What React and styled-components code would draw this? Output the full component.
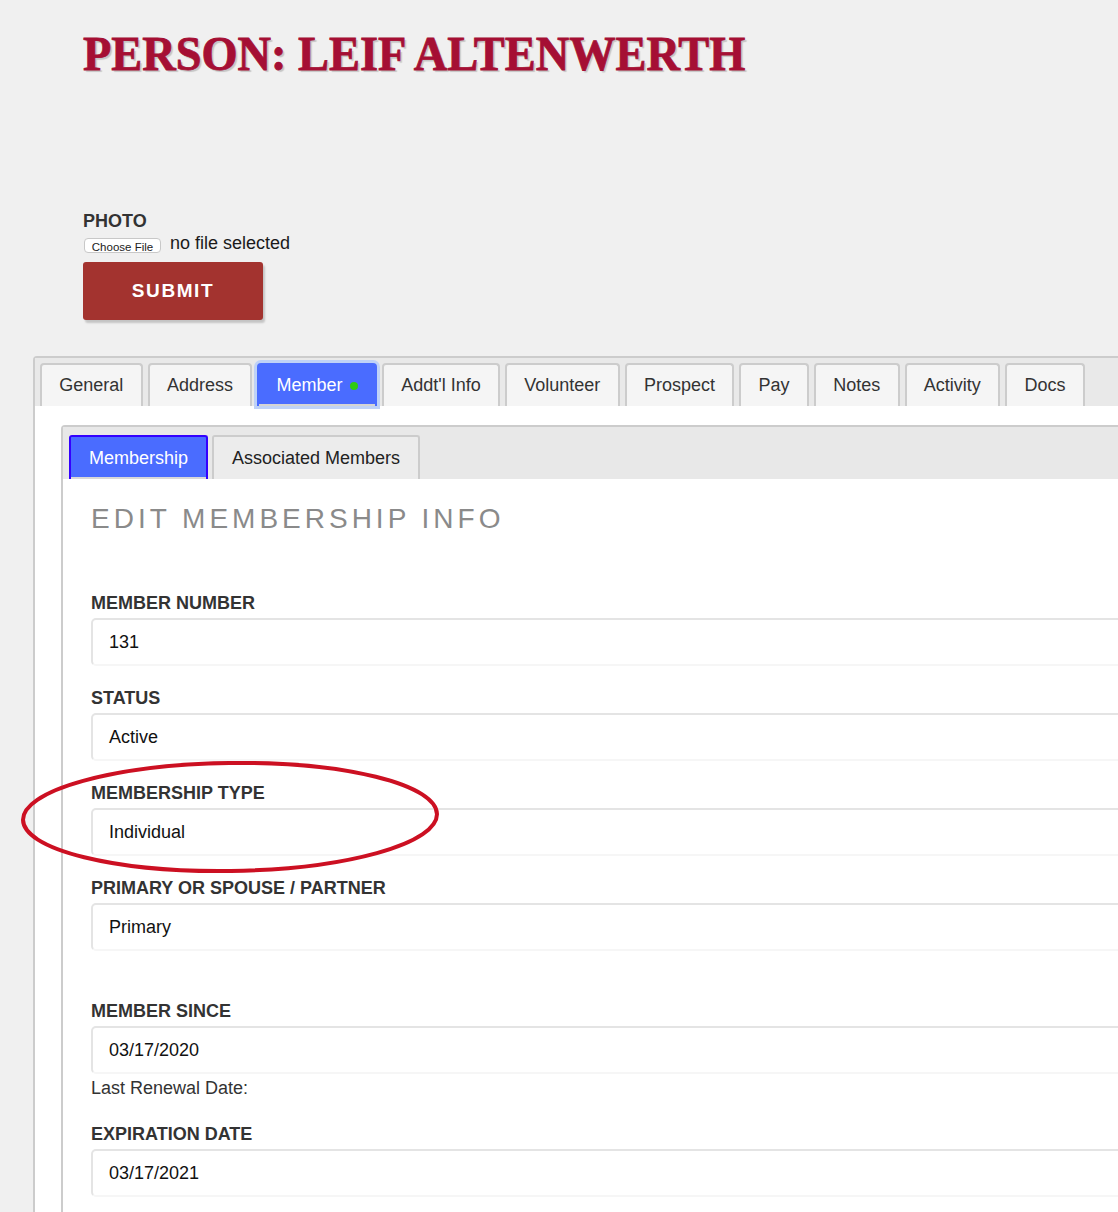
import React from 'react';
import styled, { createGlobalStyle } from "styled-components";

const GlobalStyle = createGlobalStyle`
  html, body {
    margin:0;
    padding:0;
    overflow:hidden;
    background:#f0f0f0;
    font-family:"Liberation Sans", Arial, sans-serif;
  }
`

const Page = styled.div`
  position:relative;
  min-height:1212px;
`

const Header = styled.div`
  padding:30px 0 0 83px;
`

const Title = styled.h1`
  margin:0;
  font-family:"Liberation Serif", serif;
  font-weight:bold;
  font-size:48px;
  line-height:47px;
  color:#a50f34;
  -webkit-text-stroke:0.8px #a50f34;
  text-shadow:2px 2px 1px rgba(0,0,0,0.18);
  white-space:nowrap;
  transform:scaleX(0.966);
  transform-origin:left center;
`

const PhotoLabel = styled.div`
  margin-top:133px;
  font-size:18px;
  line-height:22px;
  font-weight:bold;
  color:#333;
`

const FileRow = styled.div`
  display:flex;
  align-items:flex-end;
  gap:9px;
  height:22px;
`

const ChooseFile = styled.button`
  margin:0 0 1px 1px;
  height:15px;
  width:77px;
  padding:2px 0 0;
  font-family:"Liberation Sans", Arial, sans-serif;
  font-size:11.5px;
  line-height:13px;
  color:#222;
  background:#fff;
  border:1px solid #c8c8c8;
  border-radius:4px;
  overflow:hidden;
`

const FileText = styled.span`
  font-size:18px;
  line-height:22px;
  color:#1a1a1a;
`

const Submit = styled.button`
  margin-top:8px;
  width:180px;
  height:58px;
  background:#a3332f;
  color:#fff;
  border:none;
  border-radius:3px;
  box-shadow:2px 3px 2px rgba(0,0,0,0.18);
  font-family:"Liberation Sans", Arial, sans-serif;
  font-weight:bold;
  font-size:19px;
  letter-spacing:1.6px;
`

const Panel = styled.div`
  margin:36px 0 0 33px;
  width:1200px;
  border-top:2px solid #ccc;
  border-left:2px solid #ccc;
  border-radius:4px 0 0 0;
  min-height:860px;
  background:#fff;
`

const TabBar = styled.div`
  display:flex;
  gap:5px;
  padding:5px 5px 0;
  background:#e9e9e9;
`

const Tab = styled.div`
  position:relative;
  display:flex;
  align-items:center;
  height:43px;
  box-sizing:border-box;
  padding:0 17.3px;
  border:2px solid ${p => p.active ? '#4a6cff' : '#ccc'};
  border-bottom:none;
  border-radius:4px 4px 0 0;
  background:${p => p.active ? '#4a6cff' : '#f5f5f5'};
  color:${p => p.active ? '#fff' : '#333'};
  font-size:18px;
  z-index:${p => p.active ? 1 : 0};
  box-shadow:${p => p.active ? '0 0 0 3px #bfd2f7, inset 0 -2px 0 #d4d4d4' : 'none'};
`

const Dot = styled.span`
  display:inline-block;
  width:8px;
  height:8px;
  border-radius:50%;
  background:#2fcc10;
  margin-left:7px;
`

const Content = styled.div`
  padding:19px 0 0 26px;
  background:#fff;
`

const InnerPanel = styled.div`
  border-top:2px solid #ccc;
  border-left:2px solid #ccc;
  border-radius:4px 0 0 0;
`

const InnerTabBar = styled.div`
  display:flex;
  gap:4px;
  padding:8px 6px 0;
  background:#e8e8e8;
`

const InnerTab = styled.div`
  display:flex;
  align-items:center;
  height:44px;
  box-sizing:border-box;
  padding:0 18px;
  border:2px solid ${p => p.active ? '#3300ff' : '#ccc'};
  border-bottom:none;
  border-radius:3px 3px 0 0;
  background:${p => p.active ? '#4a6cff' : '#ececec'};
  color:${p => p.active ? '#fff' : '#222'};
  font-size:18px;
  box-shadow:${p => p.active ? 'inset 0 -2px 0 #d8d8d8' : 'none'};
`

const Form = styled.div`
  padding:24px 0 40px 28px;
  background:#fff;
`

const Heading = styled.h2`
  margin:0 0 57px;
  font-size:28px;
  line-height:32px;
  font-weight:normal;
  letter-spacing:4px;
  color:#8a8a8a;
`

const Field = styled.div`
  margin-top:${p => p.extra ? 49 : 21}px;
`

const Label = styled.div`
  font-size:18px;
  line-height:22px;
  font-weight:bold;
  color:#333;
  margin-bottom:4px;
`

const Value = styled.div`
  display:flex;
  align-items:center;
  height:48px;
  box-sizing:border-box;
  padding-left:16px;
  border:2px solid #e4e4e4;
  border-bottom-color:#f6f6f6;
  border-radius:5px;
  font-size:18px;
  color:#111;
`

const Note = styled.div`
  margin-top:3px;
  padding-bottom:3px;
  font-size:18px;
  line-height:22px;
  color:#333;
`

const Circle = styled.svg`
  position:absolute;
  left:18px;
  top:759px;
  pointer-events:none;
`

const fields = [
  { label: 'MEMBER NUMBER', value: '131' },
  { label: 'STATUS', value: 'Active' },
  { label: 'MEMBERSHIP TYPE', value: 'Individual' },
  { label: 'PRIMARY OR SPOUSE / PARTNER', value: 'Primary' },
  { label: 'MEMBER SINCE', value: '03/17/2020', extra: true, note: 'Last Renewal Date:' },
  { label: 'EXPIRATION DATE', value: '03/17/2021' },
]

const tabs = ['General', 'Address', 'Member', "Addt'l Info", 'Volunteer', 'Prospect', 'Pay', 'Notes', 'Activity', 'Docs']

const App = () => {
  return (
    <>
      <GlobalStyle />
      <Page>
        <Header>
          <Title>PERSON: LEIF ALTENWERTH</Title>
          <PhotoLabel>PHOTO</PhotoLabel>
          <FileRow>
            <ChooseFile>Choose File</ChooseFile>
            <FileText>no file selected</FileText>
          </FileRow>
          <Submit>SUBMIT</Submit>
        </Header>

        <Panel>
          <TabBar>
            {tabs.map(t => (
              <Tab key={t} active={t === 'Member'}>
                {t}
                {t === 'Member' && <Dot />}
              </Tab>
            ))}
          </TabBar>
          <Content>
            <InnerPanel>
              <InnerTabBar>
                <InnerTab active>Membership</InnerTab>
                <InnerTab>Associated Members</InnerTab>
              </InnerTabBar>
              <Form>
                <Heading>EDIT MEMBERSHIP INFO</Heading>
                {fields.map((f, i) => (
                  <Field key={f.label} extra={f.extra} style={i === 0 ? { marginTop: 0 } : undefined}>
                    <Label>{f.label}</Label>
                    <Value>{f.value}</Value>
                    {f.note && <Note>{f.note}</Note>}
                  </Field>
                ))}
              </Form>
            </InnerPanel>
          </Content>
        </Panel>

        <Circle width="426" height="118" viewBox="0 0 426 118">
          <ellipse cx="212" cy="58" rx="207" ry="54" fill="none" stroke="#cc1022" strokeWidth="4" transform="rotate(-0.8 212 58)" />
        </Circle>
      </Page>
    </>
  );
}

export default App;
